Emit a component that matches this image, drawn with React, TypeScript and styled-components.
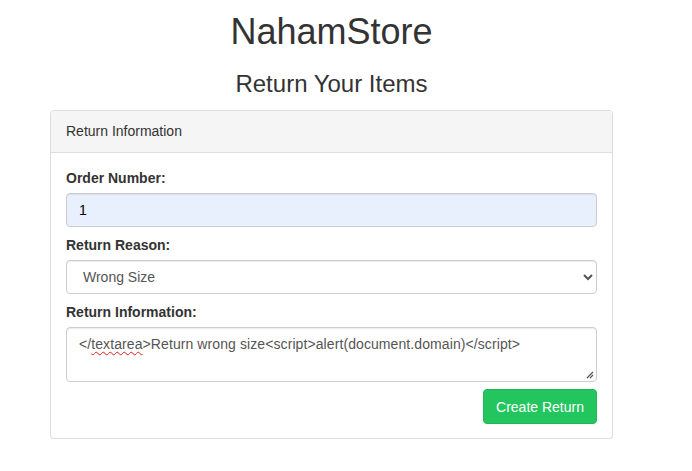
import React from "react";
import styled, { createGlobalStyle } from "styled-components";

const Global = createGlobalStyle`
  html, body { margin: 0; padding: 0; background: #fff; }
  body {
    font-family: "Liberation Sans", Arial, Helvetica, sans-serif;
    font-size: 14px;
    line-height: 20px;
    color: #333;
  }
  * { box-sizing: border-box; }
`;

const Page = styled.div`
  width: 663px;
  display: flex;
  flex-direction: column;
  align-items: center;
`;

const Title = styled.h1`
  margin: 12px 0 0;
  font-size: 36px;
  line-height: 40px;
  font-weight: 400;
  color: #333;
`;

const Subtitle = styled.h3`
  margin: 19px 0 0;
  font-size: 24px;
  line-height: 26px;
  font-weight: 400;
  color: #333;
`;

const Card = styled.div`
  width: 563px;
  margin-top: 13px;
  border: 1px solid #ddd;
  border-radius: 4px;
  background: #fff;
  box-shadow: 0 1px 1px rgba(0, 0, 0, 0.05);
`;

const CardHeader = styled.div`
  padding: 10px 15px 11px;
  background: #f5f5f5;
  border-bottom: 1px solid #ddd;
  border-radius: 3px 3px 0 0;
  color: #333;
`;

const CardBody = styled.div`
  padding: 15px 15px 14px;
  display: flex;
  flex-direction: column;
`;

const FormGroup = styled.div<{ $gap?: number }>`
  display: flex;
  flex-direction: column;
  margin-bottom: ${(p) => p.$gap ?? 8}px;
`;

const Label = styled.label`
  display: block;
  font-weight: 700;
  margin-bottom: 5px;
  color: #333;
`;

const Input = styled.input`
  height: 34px;
  width: 100%;
  padding: 6px 12px;
  font-family: inherit;
  font-size: 14px;
  color: #000;
  background: #e8f0fe;
  border: 1px solid #ccc;
  border-radius: 4px;
  box-shadow: inset 0 1px 1px rgba(0, 0, 0, 0.075);
  outline: none;
`;

const Select = styled.select`
  height: 34px;
  width: 100%;
  padding: 6px 12px;
  font-family: inherit;
  font-size: 14px;
  color: #555;
  background: #fff;
  border: 1px solid #ccc;
  border-radius: 4px;
  box-shadow: inset 0 1px 1px rgba(0, 0, 0, 0.075);
  outline: none;
`;

const TextBox = styled.div`
  position: relative;
  height: 55px;
  width: 100%;
  padding: 6px 12px;
  font-size: 14px;
  line-height: 20px;
  letter-spacing: 0.09px;
  color: #555;
  background: #fff;
  border: 1px solid #ccc;
  border-radius: 4px;
  box-shadow: inset 0 1px 1px rgba(0, 0, 0, 0.075);
  white-space: nowrap;
`;

const Misspelled = styled.span`
  text-decoration: underline wavy #e02020;
  text-decoration-thickness: 1px;
  text-underline-offset: 2px;
`;

const Grip = styled.svg`
  position: absolute;
  right: 2px;
  bottom: 2px;
`;

const Actions = styled.div`
  display: flex;
  justify-content: flex-end;
`;

const Button = styled.button`
  height: 35px;
  padding: 6px 12px;
  font-family: inherit;
  font-size: 14px;
  line-height: 20px;
  color: #fff;
  background: #22c55e;
  border: 1px solid #1eb655;
  border-radius: 4px;
  cursor: pointer;
`;

export default function App() {
  return (
    <>
      <Global />
      <Page>
        <Title>NahamStore</Title>
        <Subtitle>Return Your Items</Subtitle>
        <Card>
          <CardHeader>Return Information</CardHeader>
          <CardBody>
            <FormGroup>
              <Label>Order Number:</Label>
              <Input defaultValue="1" />
            </FormGroup>
            <FormGroup>
              <Label>Return Reason:</Label>
              <Select defaultValue="wrong">
                <option value="wrong">Wrong Size</option>
                <option value="damaged">Damaged</option>
                <option value="other">Other</option>
              </Select>
            </FormGroup>
            <FormGroup $gap={7}>
              <Label>Return Information:</Label>
              <TextBox role="textbox" aria-multiline="true">
                {"</"}
                <Misspelled>textarea</Misspelled>
                {">Return wrong size<script>alert(document.domain)</script>"}
                <Grip width="9" height="9" viewBox="0 0 9 9">
                  <path d="M8 2 L2 8 M8 5 L5 8" stroke="#555" strokeWidth="1.2" fill="none" />
                </Grip>
              </TextBox>
            </FormGroup>
            <Actions>
              <Button type="button">Create Return</Button>
            </Actions>
          </CardBody>
        </Card>
      </Page>
    </>
  );
}
